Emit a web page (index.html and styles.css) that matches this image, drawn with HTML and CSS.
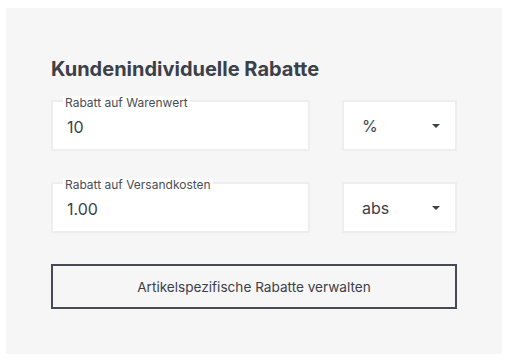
FILE: index.html
```html
<!DOCTYPE html>
<html lang="de">
<head>
  <meta charset="UTF-8" />
  <title>Kundenindividuelle Rabatte</title>
  <link rel="stylesheet" href="styles.css">
</head>
<body>
  <div class="panel">
    <h2 class="title">Kundenindividuelle Rabatte</h2>

    <div class="row">
      <div class="field">
        <label class="field-label">Rabatt auf Warenwert</label>
        <div class="field-value">10</div>
      </div>
      <div class="select">
        <span>%</span>
        <span class="caret"></span>
      </div>
    </div>

    <div class="row">
      <div class="field">
        <label class="field-label">Rabatt auf Versandkosten</label>
        <div class="field-value">1.00</div>
      </div>
      <div class="select">
        <span>abs</span>
        <span class="caret"></span>
      </div>
    </div>

    <button class="btn">Artikelspezifische Rabatte verwalten</button>
  </div>
</body>
</html>
```

FILE: styles.css
```css
body {
  margin: 8px 6px;
  background: #fff;
  font-family: Inter, 'Noto Sans', sans-serif;
  color: #3c4049;
}

.panel {
  background: #f6f6f6;
  height: 346px;
  box-sizing: border-box;
  padding: 49px 45px 0;
}

.title {
  margin: 0 0 19px;
  font-size: 20px;
  font-weight: 700;
  line-height: 24px;
  color: #3c4049;
}

.row {
  display: grid;
  grid-template-columns: 1fr 115px;
  column-gap: 32px;
  margin-bottom: 31px;
}

.field,
.select {
  height: 51px;
  box-sizing: border-box;
  background: #fff;
  border: 2px solid #eeeeee;
}

.field {
  position: relative;
  padding: 0 14px;
  display: flex;
  align-items: center;
}

.field-label {
  position: absolute;
  top: -6px;
  left: 10px;
  padding: 0 2px;
  background: #fff;
  font-size: 12px;
  line-height: 13px;
  color: #4a4d55;
}

.field-value {
  font-size: 16px;
  padding-top: 3px;
}

.select {
  display: flex;
  align-items: center;
  justify-content: space-between;
  padding: 0 15px 0 18px;
  font-size: 16px;
}

.caret {
  width: 0;
  height: 0;
  border-left: 4px solid transparent;
  border-right: 4px solid transparent;
  border-top: 4px solid #3c4049;
}

.btn {
  display: block;
  width: 100%;
  height: 45px;
  background: transparent;
  border: 2px solid #474a54;
  font-family: inherit;
  font-size: 13.6px;
  color: #3c4049;
  cursor: pointer;
}
```
